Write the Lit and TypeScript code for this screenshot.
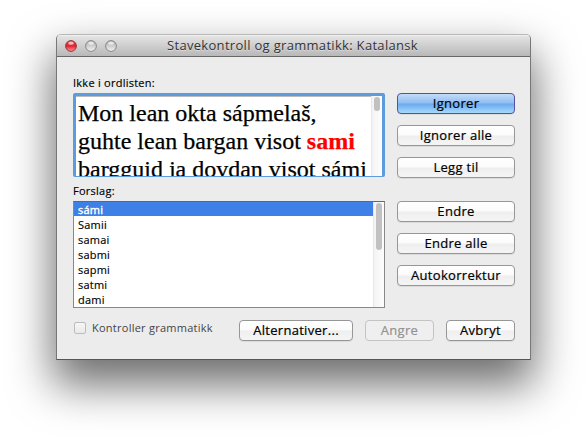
import { LitElement, html, css } from "lit";
import { customElement, property } from "lit/decorators.js";

@customElement("push-button")
class PushButton extends LitElement {
  @property() label = "";
  @property() kind = "";
  static styles = css`
    :host { display: block; height: 21px; }
    .face {
      box-sizing: border-box; height: 21px; border: 1px solid #969696; border-radius: 4px;
      background: linear-gradient(#fff 0, #fbfbfb 48%, #eee 52%, #f5f5f5 100%);
      box-shadow: 0 1px 0 rgba(0,0,0,.07);
      display: flex; align-items: center; justify-content: center;
      font: 13px/19px "Open Sans", sans-serif; color: #000; white-space: nowrap;
      letter-spacing: .3px; -webkit-text-stroke: .2px currentColor;
    }
    .primary { border-color: #5450a4; background: linear-gradient(#c3dcf8 0, #8fbdf2 48%, #6aa9ef 52%, #a6dafb 100%); }
    .disabled { border-color: #c3c3c3; color: #929292; background: #efefef; box-shadow: none; }
  `;
  render() { return html`<div class="face ${this.kind}">${this.label}</div>`; }
}

@customElement("app-root")
class AppRoot extends LitElement {
  static styles = css`
    :host { display: block; box-sizing: border-box; height: 438px; padding: 34px 0 0 56px; overflow: hidden; background: #fff; font-family: "Open Sans", sans-serif; color: #000; }
    .window { box-sizing: border-box; width: 475px; height: 326px; border: 1px solid #777; border-top-color: #b8b8b8; border-bottom-color: #555; border-radius: 5px 5px 0 0; background: #ececec; box-shadow: 0 22px 44px 3px rgba(0,0,0,.57); }
    .bar { box-sizing: border-box; height: 22px; border-bottom: 1px solid #686868; border-radius: 4px 4px 0 0; background: linear-gradient(#f4f4f4 0, #e2e2e2 8%, #b8b8b8 100%); display: grid; grid-template-columns: 110px 1fr; align-items: center; }
    .lights { display: flex; gap: 8px; padding-left: 8px; }
    .light { width: 12px; height: 12px; display: block; }
    .title { font-size: 13px; line-height: 21px; color: #333; letter-spacing: .31px; text-shadow: 0 1px 0 rgba(255,255,255,.4); white-space: nowrap; }
    .body { display: grid; grid-template-columns: 312px 118px; column-gap: 12px; padding: 18px 15px 0 16px; }
    .caption { font-size: 11px; line-height: 16px; height: 18px; letter-spacing: .25px; white-space: nowrap; -webkit-text-stroke: .15px currentColor; }
    .caption.second { margin-top: 6px; }
    .editor { box-sizing: border-box; height: 84px; border: 3px solid #5c9bdc; border-bottom-width: 1px; border-radius: 2px; background: #fff; display: flex; overflow: hidden; }
    .text { flex: 1; padding: 3px 0 0 2px; font: 24px/28px "Liberation Serif", serif; white-space: nowrap; overflow: hidden; box-shadow: inset 0 1px 0 #bbb; -webkit-text-stroke: .25px currentColor; }
    .wrong { color: #f00; font-weight: bold; }
    .track { box-sizing: border-box; width: 11px; border-left: 1px solid #e8e8e8; background: linear-gradient(90deg, #f3f3f3, #fdfdfd); padding: 1px 1px 0 2px; }
    .thumb { width: 6px; border-radius: 3px; background: #c1c1c1; }
    .short { height: 14px; }
    .long { height: 47px; }
    .list { box-sizing: border-box; height: 107px; border: 1px solid #888; border-top-color: #666; background: #fff; display: flex; overflow: hidden; }
    .rows { flex: 1; }
    .row { height: 15px; padding-left: 4px; font-size: 11px; line-height: 16px; letter-spacing: .2px; -webkit-text-stroke: .15px currentColor; }
    .selected { height: 14px; margin-bottom: 1px; background: #3f80e6; color: #fff; -webkit-text-stroke-width: .4px; }
    .actions { display: flex; flex-direction: column; gap: 11px; padding-top: 18px; }
    .gap { margin-top: 12px; }
    .foot { display: flex; padding: 12px 15px 0 17px; }
    .check { box-sizing: border-box; width: 12px; height: 12px; margin: 2px 6px 0 0; border: 1px solid #bdbdbd; border-radius: 2px; background: linear-gradient(#f6f6f6, #eaeaea); }
    .option { width: 147px; font-size: 11px; line-height: 16px; letter-spacing: .25px; color: #444; white-space: nowrap; }
    .wide { width: 114px; margin-right: 12px; }
    .mid { width: 69px; margin-right: 12px; }
    .end { width: 69px; }
  `;
  light(red: boolean) {
    const id = red ? "shade-red" : "shade-grey";
    return html`<svg class="light" viewBox="0 0 12 12">
      <defs><linearGradient id=${id} x1="0" y1="0" x2="0" y2="1">
        <stop offset="0" stop-color=${red ? "#c44" : "#aaa"} /><stop offset=".5" stop-color=${red ? "#e3232f" : "#cfcfcf"} /><stop offset="1" stop-color=${red ? "#ff9a9a" : "#f2f2f2"} />
      </linearGradient></defs>
      <circle cx="6" cy="6" r="5.4" fill="url(#${id})" stroke=${red ? "#9c3438" : "#888"} stroke-width="1" />
      <ellipse cx="6" cy="3.2" rx="2.8" ry="1.6" fill="#fff" opacity=".65" />
    </svg>`;
  }
  render() {
    const words = ["sámi", "Samii", "samai", "sabmi", "sapmi", "satmi", "dami"];
    return html`<div class="window">
      <div class="bar">
        <div class="lights">${this.light(true)}${this.light(false)}${this.light(false)}</div>
        <div class="title">Stavekontroll og grammatikk: Katalansk</div>
      </div>
      <div class="body">
        <div>
          <div class="caption">Ikke i ordlisten:</div>
          <div class="editor">
            <div class="text">Mon lean okta sápmelaš,<br />guhte lean bargan visot <span class="wrong">sami</span><br />bargguid ja dovdan visot sámi</div>
            <div class="track"><div class="thumb short"></div></div>
          </div>
          <div class="caption second">Forslag:</div>
          <div class="list">
            <div class="rows">${words.map((w, i) => html`<div class="row ${i === 0 ? "selected" : ""}">${w}</div>`)}</div>
            <div class="track"><div class="thumb long"></div></div>
          </div>
        </div>
        <div class="actions">
          <push-button kind="primary" label="Ignorer"></push-button>
          <push-button label="Ignorer alle"></push-button>
          <push-button label="Legg til"></push-button>
          <push-button class="gap" label="Endre"></push-button>
          <push-button label="Endre alle"></push-button>
          <push-button label="Autokorrektur"></push-button>
        </div>
      </div>
      <div class="foot">
        <div class="check"></div>
        <div class="option">Kontroller grammatikk</div>
        <push-button class="wide" label="Alternativer..."></push-button>
        <push-button class="mid" kind="disabled" label="Angre"></push-button>
        <push-button class="end" label="Avbryt"></push-button>
      </div>
    </div>`;
  }
}
